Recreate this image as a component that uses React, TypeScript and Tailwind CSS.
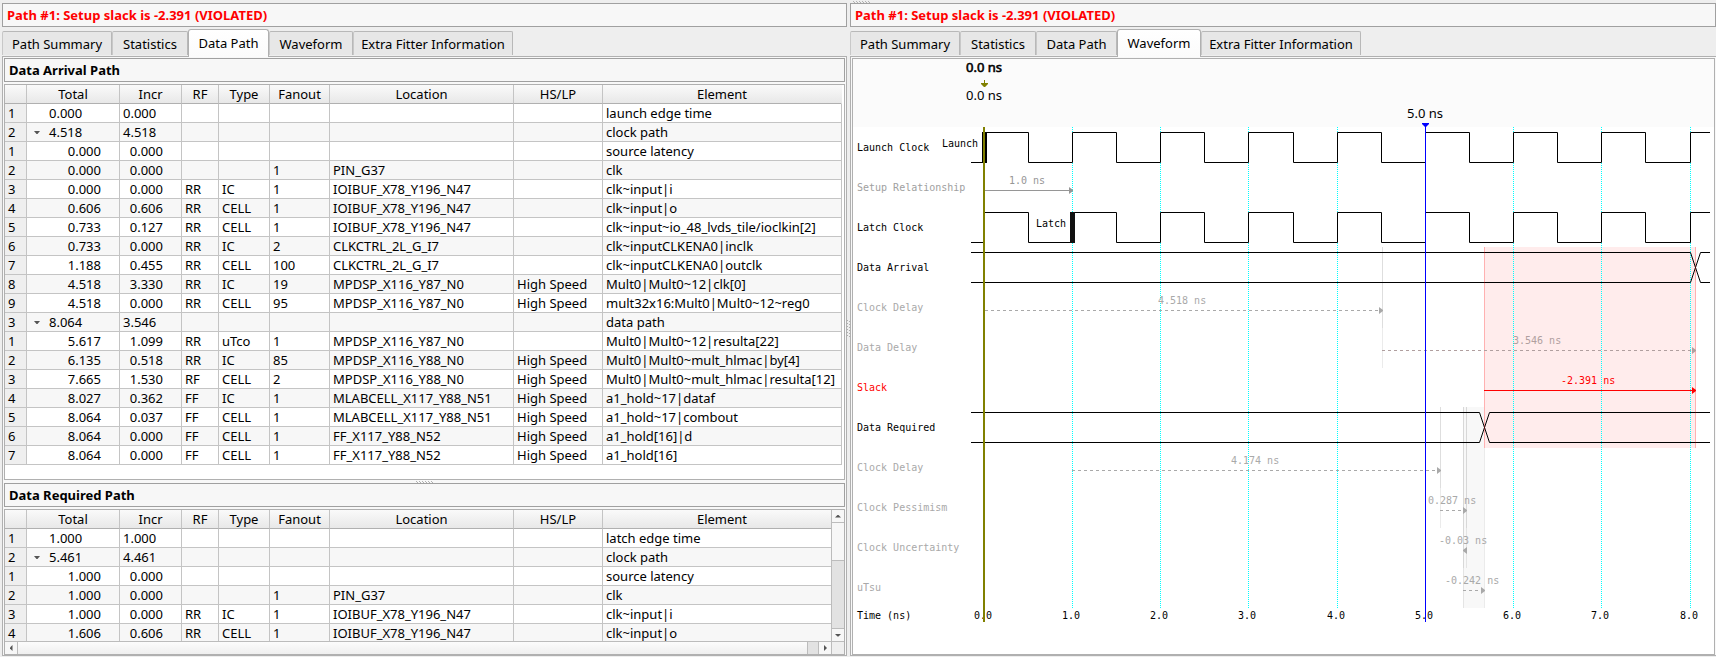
import React from "react";

type Row = {
  n: number;
  total: string;
  incr: string;
  group?: boolean;
  expandable?: boolean;
  rf?: string;
  type?: string;
  fanout?: string;
  location?: string;
  hs?: string;
  element: string;
};

const row = (n: number, total: string, incr: string, rf: string, type: string, fanout: string, location: string, hs: string, element: string): Row => ({
  n, total, incr, rf, type, fanout, location, hs, element,
});
const group = (n: number, total: string, incr: string, element: string, expandable = false): Row => ({
  n, total, incr, element, expandable, group: true,
});

const HS = "High Speed";

const arrival: Row[] = [
  group(1, "0.000", "0.000", "launch edge time"),
  group(2, "4.518", "4.518", "clock path", true),
  row(1, "0.000", "0.000", "", "", "", "", "", "source latency"),
  row(2, "0.000", "0.000", "", "", "1", "PIN_G37", "", "clk"),
  row(3, "0.000", "0.000", "RR", "IC", "1", "IOIBUF_X78_Y196_N47", "", "clk~input|i"),
  row(4, "0.606", "0.606", "RR", "CELL", "1", "IOIBUF_X78_Y196_N47", "", "clk~input|o"),
  row(5, "0.733", "0.127", "RR", "CELL", "1", "IOIBUF_X78_Y196_N47", "", "clk~input~io_48_lvds_tile/ioclkin[2]"),
  row(6, "0.733", "0.000", "RR", "IC", "2", "CLKCTRL_2L_G_I7", "", "clk~inputCLKENA0|inclk"),
  row(7, "1.188", "0.455", "RR", "CELL", "100", "CLKCTRL_2L_G_I7", "", "clk~inputCLKENA0|outclk"),
  row(8, "4.518", "3.330", "RR", "IC", "19", "MPDSP_X116_Y87_N0", HS, "Mult0|Mult0~12|clk[0]"),
  row(9, "4.518", "0.000", "RR", "CELL", "95", "MPDSP_X116_Y87_N0", HS, "mult32x16:Mult0|Mult0~12~reg0"),
  group(3, "8.064", "3.546", "data path", true),
  row(1, "5.617", "1.099", "RR", "uTco", "1", "MPDSP_X116_Y87_N0", "", "Mult0|Mult0~12|resulta[22]"),
  row(2, "6.135", "0.518", "RR", "IC", "85", "MPDSP_X116_Y88_N0", HS, "Mult0|Mult0~mult_hlmac|by[4]"),
  row(3, "7.665", "1.530", "RF", "CELL", "2", "MPDSP_X116_Y88_N0", HS, "Mult0|Mult0~mult_hlmac|resulta[12]"),
  row(4, "8.027", "0.362", "FF", "IC", "1", "MLABCELL_X117_Y88_N51", HS, "a1_hold~17|dataf"),
  row(5, "8.064", "0.037", "FF", "CELL", "1", "MLABCELL_X117_Y88_N51", HS, "a1_hold~17|combout"),
  row(6, "8.064", "0.000", "FF", "CELL", "1", "FF_X117_Y88_N52", HS, "a1_hold[16]|d"),
  row(7, "8.064", "0.000", "FF", "CELL", "1", "FF_X117_Y88_N52", HS, "a1_hold[16]"),
];

const required: Row[] = [
  group(1, "1.000", "1.000", "latch edge time"),
  group(2, "5.461", "4.461", "clock path", true),
  row(1, "1.000", "0.000", "", "", "", "", "", "source latency"),
  row(2, "1.000", "0.000", "", "", "1", "PIN_G37", "", "clk"),
  row(3, "1.000", "0.000", "RR", "IC", "1", "IOIBUF_X78_Y196_N47", "", "clk~input|i"),
  row(4, "1.606", "0.606", "RR", "CELL", "1", "IOIBUF_X78_Y196_N47", "", "clk~input|o"),
];

const tabs = [
  { name: "Path Summary", width: "w-[110px]" },
  { name: "Statistics", width: "w-[76px]" },
  { name: "Data Path", width: "w-[81px]" },
  { name: "Waveform", width: "w-[84px]" },
  { name: "Extra Fitter Information", width: "w-[160px]" },
];

function Caption({ children, red }: { children: React.ReactNode; red?: boolean }) {
  return (
    <h2
      className={`flex h-6 shrink-0 items-center border border-[#a0a0a0] bg-[#f7f7f7] px-1 text-[13px] leading-4 font-bold ${
        red ? "text-[#ff0000]" : "text-black"
      }`}
    >
      {children}
    </h2>
  );
}

function TabBar({ active }: { active: string }) {
  return (
    <div role="tablist" className="mt-[2px] flex h-[27px] shrink-0 items-end">
      {tabs.map((t) =>
        t.name === active ? (
          <button
            key={t.name}
            role="tab"
            aria-selected="true"
            className={`${t.width} relative z-10 -mb-px h-7 shrink-0 rounded-t-[3px] border border-b-0 border-[#b0b0b0] bg-gradient-to-b from-white to-[#fbfbfb] pb-px leading-4 whitespace-nowrap`}
          >
            {t.name}
          </button>
        ) : (
          <button
            key={t.name}
            role="tab"
            aria-selected="false"
            className={`${t.width} mb-px h-6 shrink-0 rounded-t-[2px] border border-b-0 border-l-[#c8c8c8] border-t-[#b8b8b8] border-r-[#b8b8b8] bg-[#e7e7e7] leading-4 whitespace-nowrap`}
          >
            {t.name}
          </button>
        ),
      )}
    </div>
  );
}

const headers = ["", "Total", "Incr", "RF", "Type", "Fanout", "Location", "HS/LP", "Element"];

function PathTable({ label, rows, width }: { label: string; rows: Row[]; width: string }) {
  const cell = "h-[19px] overflow-hidden border-r border-b border-[#c4c4c4] p-0 pl-[3px] leading-[18px]";
  return (
    <table aria-label={label} className={`${width} table-fixed border-separate border-spacing-0 text-left whitespace-nowrap`}>
      <colgroup>
        <col className="w-[22px]" />
        <col className="w-[93px]" />
        <col className="w-[62px]" />
        <col className="w-[37px]" />
        <col className="w-[51px]" />
        <col className="w-[60px]" />
        <col className="w-[184px]" />
        <col className="w-[89px]" />
        <col />
      </colgroup>
      <thead>
        <tr>
          {headers.map((h, i) => (
            <th
              key={i}
              scope="col"
              className="h-[19px] border-r border-b border-r-[#c4c4c4] border-b-[#b0b0b0] bg-gradient-to-b from-[#fafafa] to-[#e8e8e8] p-0 text-center leading-[18px] font-normal last:border-r-transparent"
            >
              {h}
            </th>
          ))}
        </tr>
      </thead>
      <tbody>
        {rows.map((r, i) => (
          <tr key={i} className="bg-white even:bg-[#f7f7f7]">
            <th scope="row" className={`${cell} bg-[#efefef] font-normal`}>
              {r.n}
            </th>
            <td className={cell}>
              {r.group ? (
                <div className="flex items-center">
                  <span className="flex w-[19px] pl-1">
                    {r.expandable && (
                      <svg viewBox="0 0 6 3" className="h-[3px] w-[6px]" fill="#555">
                        <path d="M0 0h6L3.5 3h-1z" />
                      </svg>
                    )}
                  </span>
                  {r.total}
                </div>
              ) : (
                <div className="pr-[18px] text-right">{r.total}</div>
              )}
            </td>
            <td className={cell}>{r.group ? r.incr : <div className="pr-[18px] text-right">{r.incr}</div>}</td>
            <td className={cell}>{r.rf}</td>
            <td className={cell}>{r.type}</td>
            <td className={cell}>{r.fanout}</td>
            <td className={cell}>{r.location}</td>
            <td className={cell}>{r.hs}</td>
            <td className={cell}>{r.element}</td>
          </tr>
        ))}
      </tbody>
    </table>
  );
}

function ScrollArrow({ d, label, className }: { d: string; label: string; className: string }) {
  return (
    <button aria-label={label} className={`flex shrink-0 items-center justify-center border-[#bcbcbc] bg-[#f7f7f7] ${className}`}>
      <svg viewBox="0 0 8 8" className="h-2 w-2" fill="#555">
        <path d={d} />
      </svg>
    </button>
  );
}

function Grip({ vertical }: { vertical?: boolean }) {
  return vertical ? (
    <svg className="h-[17px] w-[3px]" viewBox="0 0 3 17">
      <path d="M0.5 0V17" stroke="#b0b0b0" strokeDasharray="1 2" />
      <path d="M2.5 1V17" stroke="#b0b0b0" strokeDasharray="1 2" />
    </svg>
  ) : (
    <svg className="h-[2px] w-[17px]" viewBox="0 0 17 2">
      <path d="M0 0.5H17" stroke="#b0b0b0" strokeDasharray="1 2" />
      <path d="M1 1.5H17" stroke="#b0b0b0" strokeDasharray="1 2" />
    </svg>
  );
}

function DataPathPanel() {
  return (
    <section className="flex min-w-0 flex-col pt-[3px] pl-[2px]">
      <Caption red>Path #1: Setup slack is -2.391 (VIOLATED)</Caption>
      <TabBar active="Data Path" />
      <div role="tabpanel" className="flex flex-1 flex-col border border-[#b0b0b0] bg-[#f8f8f8] p-px pb-0">
        <Caption>Data Arrival Path</Caption>
        <div className="mt-[2px] h-[396px] overflow-hidden border border-[#b0b0b0] bg-white">
          <PathTable label="Data Arrival Path" rows={arrival} width="w-[calc(100%-2px)]" />
        </div>
        <div className="flex h-[3px] items-center justify-center">
          <Grip />
        </div>
        <Caption>Data Required Path</Caption>
        <div className="mt-[2px] flex flex-1 flex-col border border-[#b0b0b0] bg-white">
          <div className="flex h-[131px]">
            <div className="min-w-0 flex-1 overflow-hidden">
              <PathTable label="Data Required Path" rows={required} width="w-[calc(100%+11px)]" />
            </div>
            <div className="flex w-[13px] flex-col border-l border-[#bcbcbc] bg-[#e2e2e2]">
              <ScrollArrow label="Scroll up" d="M1 5.5h6L4.5 3h-1z" className="h-[13px] border-b" />
              <div className="h-[38px] border-b border-[#bcbcbc] bg-[#f7f7f7]" />
              <div className="flex-1" />
              <ScrollArrow label="Scroll down" d="M1 3h6L4.5 5.5h-1z" className="h-[13px] border-t" />
            </div>
          </div>
          <div className="flex h-[13px] border-t border-[#bcbcbc] bg-[#e2e2e2]">
            <ScrollArrow label="Scroll left" d="M5.5 1v6L3 4.5v-1z" className="w-[13px] border-r" />
            <div className="flex-1 border-r border-[#bcbcbc] bg-gradient-to-b from-[#fcfcfc] to-[#efefef]" />
            <div className="w-[10px]" />
            <ScrollArrow label="Scroll right" d="M3 1v6l2.5-2.5v-1z" className="w-[14px] border-x" />
            <div className="w-3 bg-[#efefef]" />
          </div>
        </div>
      </div>
    </section>
  );
}

const grid = [1072, 1160, 1248, 1337, 1425, 1513, 1601, 1690];
const falls = [1028, 1116, 1204, 1293, 1381, 1469, 1557, 1645];

function clockPath(high: number, low: number) {
  let d = `M971 ${low}.5H983.5V${high}.5`;
  grid.forEach((g, i) => {
    d += `H${falls[i]}.5V${low}.5H${g}.5V${high}.5`;
  });
  return d + "H1710";
}

const signals: [string, string][] = [
  ["Launch Clock", "#000"],
  ["Setup Relationship", "#a0a0a0"],
  ["Latch Clock", "#000"],
  ["Data Arrival", "#000"],
  ["Clock Delay", "#a9a9a9"],
  ["Data Delay", "#a9a9a9"],
  ["Slack", "#f00"],
  ["Data Required", "#000"],
  ["Clock Delay", "#a9a9a9"],
  ["Clock Pessimism", "#a9a9a9"],
  ["Clock Uncertainty", "#a9a9a9"],
  ["uTsu", "#a9a9a9"],
];

function Arrow({ x1, x2, y, text, tx, color = "#a9a9a9", dashed = true }: {
  x1: number; x2: number; y: number; text: string; tx: number; color?: string; dashed?: boolean;
}) {
  const tip = x2 > x1 ? -4 : 4;
  return (
    <g>
      <path d={`M${x1} ${y}.5H${x2}`} stroke={color} strokeDasharray={dashed ? "3 3" : undefined} />
      <path d={`M${x2} ${y}v1l${tip} 3v-7z`} fill={color} />
      <text x={tx} y={y - 6} fill={color}>{text}</text>
    </g>
  );
}

function Waveform() {
  return (
    <svg viewBox="853 59 861 595" className="h-[595px] w-[861px] shrink-0" fill="none" stroke="none" role="img" aria-label="Timing waveform">
      <rect x="853" y="59" width="861" height="68" fill="#fbfbfb" />
      <rect x="853" y="127" width="861" height="527" fill="#fff" />

      <rect x="1463" y="407" width="21" height="201" fill="#f8f8f8" />
      <rect x="1484" y="247" width="212" height="201" fill="#ffecec" />
      {grid.map((g) => (
        <path key={g} d={`M${g}.5 127V609`} stroke="#0ff" strokeDasharray="1 1" />
      ))}

      <g className="font-['DejaVu_Sans_Mono',monospace] text-[10px]">
        {signals.map(([name, color], i) => (
          <text key={i} x="857" y={151 + i * 40} fill={color}>{name}</text>
        ))}
        <text x="857" y="619" fill="#000">Time (ns)</text>
        <text x="974" y="619" fill="#000">0.0</text>
        {grid.map((g, i) => (
          <text key={g} x={g - 10} y="619" fill="#000">{`${i + 1}.0`}</text>
        ))}
        <text x="942" y="147" fill="#000">Launch</text>
        <text x="1036" y="227" fill="#000">Latch</text>
      </g>

      <g stroke="#000">
        <path d={clockPath(132, 162)} />
        <path d={clockPath(212, 242)} />
        <path d="M971 252.5H1690.5L1700.5 282.5H1710M971 282.5H1690.5L1700.5 252.5H1710" />
        <path d="M971 412.5H1479.5L1489.5 442.5H1710M971 442.5H1479.5L1489.5 412.5H1710" />
      </g>
      <rect x="982" y="132" width="5" height="31" fill="#000" />
      <rect x="1070" y="212" width="5" height="31" fill="#111" />

      <g stroke="#000" strokeOpacity="0.13">
        <path d="M1382.5 247V328M1440.5 407V488M1463.5 407V568M1466.5 407V528" />
      </g>
      <g stroke="#000" strokeOpacity="0.08">
        <path d="M1382.5 328V368M1440.5 488V528M1463.5 568V608M1466.5 528V568M1484.5 448V608" />
      </g>
      <path d="M1484.5 247V448M1695.5 247V448" stroke="#f00" strokeOpacity="0.25" />

      <g className="font-['DejaVu_Sans_Mono',monospace] text-[10px]">
        <Arrow x1={985} x2={1073} y={190} text="1.0 ns" tx={1009} color="#969696" dashed={false} />
        <Arrow x1={985} x2={1383} y={310} text="4.518 ns" tx={1158} />
        <Arrow x1={1382} x2={1696} y={350} text="3.546 ns" tx={1513} color="#b09f9f" />
        <Arrow x1={1484} x2={1696} y={390} text="-2.391 ns" tx={1561} color="#f00" dashed={false} />
        <Arrow x1={1072} x2={1441} y={470} text="4.174 ns" tx={1231} />
        <Arrow x1={1440} x2={1467} y={510} text="0.287 ns" tx={1428} />
        <Arrow x1={1467} x2={1463} y={550} text="-0.03 ns" tx={1439} />
        <Arrow x1={1463} x2={1485} y={590} text="-0.242 ns" tx={1445} />
      </g>

      <rect x="983" y="127" width="2" height="495" fill="#808000" />
      <path d="M984 80h1v3h3v1l-3 3h-1l-3-3v-1h3z" fill="#808000" />
      <path d="M1425.5 124V622" stroke="#00f" />
      <path d="M1422 123h7v1l-3 3h-1l-3-3z" fill="#00f" />
      <g fill="#000" className="text-[13px]">
        <text x="966" y="72" stroke="#000" strokeWidth="0.6">0.0 ns</text>
        <text x="966" y="100">0.0 ns</text>
        <text x="1407" y="118">5.0 ns</text>
      </g>
    </svg>
  );
}

function WaveformPanel() {
  return (
    <section className="flex min-w-0 flex-col">
      <div className="flex h-[3px] items-center pl-[3px]">
        <Grip />
      </div>
      <Caption red>Path #1: Setup slack is -2.391 (VIOLATED)</Caption>
      <TabBar active="Waveform" />
      <div role="tabpanel" className="flex flex-1 flex-col border border-r-0 border-[#b0b0b0] bg-[#f8f8f8] p-px pb-0">
        <div className="flex flex-1 overflow-hidden border border-[#b0b0b0] bg-white">
          <Waveform />
        </div>
      </div>
    </section>
  );
}

export default function App() {
  return (
    <main className="grid min-h-screen grid-cols-[847fr_3px_866fr] bg-[#eeeeee] pb-px font-['Noto_Sans','Open_Sans',sans-serif] text-[13px] text-black">
      <DataPathPanel />
      <div className="flex items-center justify-center">
        <Grip vertical />
      </div>
      <WaveformPanel />
    </main>
  );
}
